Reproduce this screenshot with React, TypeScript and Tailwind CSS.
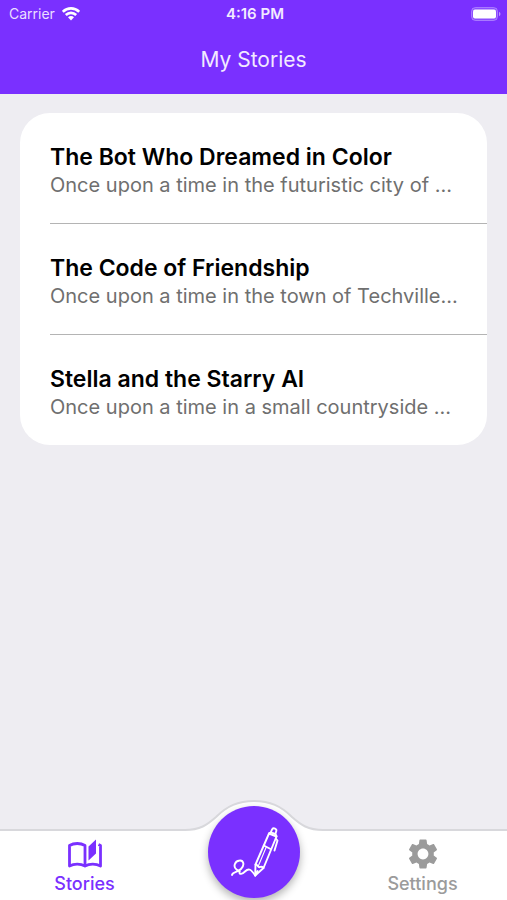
import React from "react";

type Story = { title: string; excerpt: string };

const stories: Story[] = [
  {
    title: "The Bot Who Dreamed in Color",
    excerpt: "Once upon a time in the futuristic city of ...",
  },
  {
    title: "The Code of Friendship",
    excerpt: "Once upon a time in the town of Techville...",
  },
  {
    title: "Stella and the Starry AI",
    excerpt: "Once upon a time in a small countryside ...",
  },
];

function WifiIcon() {
  return (
    <svg viewBox="0 0 18 14" className="h-[14px] w-[18px]" fill="none" stroke="currentColor" strokeWidth="2.6" aria-hidden="true">
      <path d="M0.8 4.8C5.5.2 12.500.2 17.200 4.800" />
      <path d="M3.800 8C6.800 5.100 11.200 5.100 14.200 8" />
      <path d="M6 10.300C7.800 8.700 10.200 8.700 12 10.300L9 13.400Z" fill="currentColor" stroke="none" />
    </svg>
  );
}

function BatteryIcon() {
  return (
    <svg viewBox="0 0 30 14" className="h-[14px] w-[30px]" aria-hidden="true">
      <rect x="0.5" y="0.5" width="26" height="13" rx="4" fill="white" fillOpacity="0.15" stroke="white" strokeOpacity="0.3" />
      <rect x="2" y="2.500" width="23" height="9" rx="2" fill="white" />
      <path d="M28 4.800c2 .8 2 3.600 0 4.400z" fill="white" fillOpacity="0.5" />
    </svg>
  );
}

function BookIcon() {
  return (
    <svg viewBox="0 0 34 30" className="h-[30px] w-[34px]" aria-hidden="true">
      <path
        d="M17 27V6.500C12.500 3.800 6 3.800 1.500 6.500V27C6 24.600 12.500 24.600 17 27C21.500 24.600 28 24.600 32.500 27V6.500L30.500 5.500"
        fill="none"
        stroke="currentColor"
        strokeWidth="2.800"
        strokeLinejoin="round"
      />
      <path d="M20.500 7.500L28 0.500V14.500L20.500 21.500Z" fill="currentColor" />
    </svg>
  );
}

function GearIcon() {
  return (
    <svg viewBox="2 2 20 20" className="h-[30px] w-[30px]" fill="currentColor" aria-hidden="true">
      <path d="M19.140 12.940c.04-.3.060-.61.060-.94 0-.32-.02-.64-.07-.94l2.030-1.580c.18-.14.230-.41.120-.61l-1.920-3.320c-.12-.22-.37-.29-.59-.22l-2.390.96c-.5-.38-1.030-.7-1.620-.94l-.36-2.540c-.04-.24-.24-.41-.48-.41h-3.840c-.24 0-.43.170-.47.410l-.36 2.540c-.59.240-1.130.570-1.620.940l-2.390-.96c-.22-.08-.47 0-.59.220L2.740 8.870c-.12.210-.08.470.120.610l2.030 1.580c-.05.300-.09.630-.09.940s.02.640.070.940l-2.030 1.580c-.18.140-.23.410-.12.610l1.920 3.320c.12.220.370.290.590.220l2.390-.96c.5.380 1.030.7 1.620.940l.36 2.540c.05.240.240.410.480.410h3.840c.24 0 .44-.17.470-.41l.36-2.540c.59-.24 1.130-.56 1.620-.94l2.390.96c.22.080.470 0 .59-.22l1.920-3.320c.12-.22.070-.47-.12-.61l-2.010-1.580zM12 15.600c-1.980 0-3.600-1.620-3.600-3.600s1.620-3.600 3.600-3.600 3.600 1.620 3.600 3.600-1.620 3.600-3.600 3.600z" />
    </svg>
  );
}

function PenIcon() {
  return (
    <svg viewBox="0 0 50 52" className="h-[52px] w-[50px]" fill="none" stroke="currentColor" strokeWidth="1.900" strokeLinecap="round" strokeLinejoin="round" aria-hidden="true">
      <path d="M39 7.500L25.500 38.500L25.200 49.500L33.500 42L46.500 10.500Z" />
      <path d="M39 7.500C40 5.500 46.500 7.500 46.500 10.500" />
      <path d="M41 5.800L42.200 3.200C43.500 1.200 47 2.800 46.300 5L45.500 7.800" />
      <path d="M33.800 19.500L40.500 23" />
      <path d="M36.500 20.500L28.500 39.500" strokeWidth="1.100" />
      <path d="M25.500 38.500C28 38.500 27.500 41 29.500 41.200C31 40.500 32.500 41 33.500 42" />
      <path d="M25.200 49.500L27.500 45" />
      <path d="M45.800 12.500L47.500 14.500L44.500 24.500" />
      <path d="M2 49C2.500 45.500 7 47 11 43C15 39 13.500 34 9.500 34.500C4.500 35 3 41 6.500 43.500C8.500 45 10.500 44 9.500 46C9 49 12.500 48 15 45.500C19 41.500 21 43.500 25.200 49.500" />
    </svg>
  );
}

function Notch() {
  return (
    <svg viewBox="0 0 138 34" className="absolute bottom-full left-1/2 -mb-px h-[34px] w-[138px] -translate-x-1/2" aria-hidden="true">
      <path d="M0 32C15 32 22 27 31 19C42 8 53 3 69 3C85 3 96 8 107 19C116 27 123 32 138 32V34H0Z" fill="white" />
      <path d="M0 32C15 32 22 27 31 19C42 8 53 3 69 3C85 3 96 8 107 19C116 27 123 32 138 32" fill="none" stroke="#d8d8dc" strokeWidth="2" />
    </svg>
  );
}

export default function App() {
  return (
    <div className="flex min-h-screen flex-col bg-[#eeedf2] font-['Inter','Liberation_Sans',sans-serif]">
      <header className="bg-[#7a30ff] text-white">
        <div className="grid h-7 grid-cols-3 items-center pr-[6px] pl-[9px] text-sm">
          <div className="flex items-center gap-[7px] text-[#eadfff]">
            <span>Carrier</span>
            <span className="text-white"><WifiIcon /></span>
          </div>
          <span className="text-center text-[15px] font-semibold text-[#f2eaff]">4:16 PM</span>
          <span className="justify-self-end"><BatteryIcon /></span>
        </div>
        <h1 className="flex h-[66px] items-center justify-center pb-[2px] text-[21px] text-[#f2eaff]">My Stories</h1>
      </header>

      <main className="flex-1 px-5 pt-[19px] pb-12">
        <ul className="overflow-hidden rounded-[30px] bg-white pl-[30px]">
          {stories.map((story) => (
            <li key={story.title} className="border-b border-[#b4b4b4] last:border-b-0">
              <a href="#story" className="block pt-[30px] pr-5 pb-6">
                <h2 className="truncate text-[23px] leading-7 font-semibold text-black">{story.title}</h2>
                <p className="truncate text-[20px] leading-7 text-[#6f6f6f]">{story.excerpt}</p>
              </a>
            </li>
          ))}
        </ul>
      </main>

      <nav aria-label="Main" className="sticky bottom-0 border-t-2 border-[#d8d8dc] bg-white">
        <Notch />
        <div className="grid h-[69px] grid-cols-3 text-[18px] leading-6 font-medium">
          <a href="#stories" aria-current="page" className="flex flex-col items-center gap-[3px] pt-2 text-[#7a30ff]">
            <BookIcon />
            <span>Stories</span>
          </a>
          <span />
          <a href="#settings" className="flex flex-col items-center gap-[3px] pt-2 text-[#9b9b9b]">
            <GearIcon />
            <span>Settings</span>
          </a>
        </div>
        <button
          type="button"
          aria-label="Write a story"
          className="absolute bottom-[2px] left-1/2 flex h-[92px] w-[92px] -translate-x-1/2 items-center justify-center rounded-full bg-[#7a30ff] pl-[3px] text-white shadow-[0_4px_8px_rgba(0,0,0,0.3)]"
        >
          <PenIcon />
        </button>
      </nav>
    </div>
  );
}
